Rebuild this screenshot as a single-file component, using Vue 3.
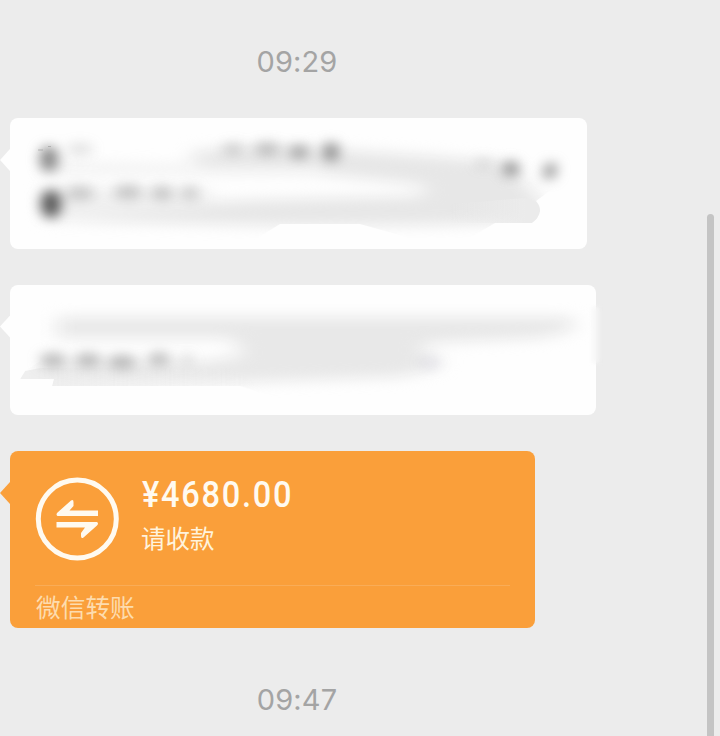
<script setup>
import { reactive } from 'vue'

const transfer = reactive({
  amount: '¥4680.00',
  hint: '请收款',
  source: '微信转账',
})
</script>

<template>
  <main class="chat">
    <time class="stamp">09:29</time>

    <section class="bubble first">
      <svg class="smudge" width="577" height="131" viewBox="10 118 577 131" aria-hidden="true">
        <defs>
          <filter id="soft" filterUnits="userSpaceOnUse" x="0" y="100" width="620" height="330" color-interpolation-filters="sRGB"><feGaussianBlur stdDeviation="10 7" /></filter>
          <filter id="mid" filterUnits="userSpaceOnUse" x="0" y="100" width="620" height="330" color-interpolation-filters="sRGB"><feGaussianBlur stdDeviation="6.5 6" /></filter>
          <filter id="tiny" filterUnits="userSpaceOnUse" x="0" y="100" width="620" height="330" color-interpolation-filters="sRGB"><feGaussianBlur stdDeviation="0.6" /></filter>
          <linearGradient id="tail" x1="450" x2="525" y1="0" y2="0" gradientUnits="userSpaceOnUse">
            <stop offset="0" stop-color="#ebebeb" stop-opacity="0" />
            <stop offset="1" stop-color="#ebebeb" />
          </linearGradient>
          <clipPath id="wipeA"><path d="M10 118H587V180L548 192L536 201Q540 205 540 211Q539 218 532 223H495L470 238H410L360 224H280L240 249H10Z" /></clipPath>
        </defs>
        <g clip-path="url(#wipeA)">
          <g filter="url(#soft)">
            <path d="M195 150L300 147L430 156L500 162L525 182L545 205V222L430 225L300 226L60 221L55 210L250 200L415 196L430 190L415 184L330 175L230 171L190 162Z" fill="#e7e7e7" />
            <path d="M45 163L210 166L325 164V174L50 173Z" fill="#f0f0f0" />
            <path d="M45 188L210 190V207L50 222Z" fill="#f0f0f0" />
          </g>
          <path d="M450 204L525 198Q540 200 540 211Q539 218 532 223H450Z" fill="url(#tail)" filter="url(#tiny)" />
        </g>
        <g filter="url(#mid)" fill="#777">
          <ellipse cx="49" cy="159" rx="9" ry="13" opacity=".9" />
          <ellipse cx="51" cy="204" rx="10" ry="14" fill="#555" opacity="1" />
          <ellipse cx="80" cy="149" rx="13" ry="6" opacity=".22" />
          <ellipse cx="80" cy="193" rx="14" ry="7" opacity=".37" />
          <ellipse cx="128" cy="192" rx="14" ry="7" opacity=".4" />
          <ellipse cx="162" cy="193" rx="11" ry="7" opacity=".4" />
          <ellipse cx="190" cy="193" rx="9" ry="7" opacity=".34" />
          <ellipse cx="233" cy="149" rx="11" ry="6" opacity=".32" />
          <ellipse cx="267" cy="149" rx="13" ry="7" opacity=".42" />
          <ellipse cx="299" cy="152" rx="10" ry="7" opacity=".62" />
          <ellipse cx="331" cy="152" rx="8" ry="10" opacity=".8" />
          <ellipse cx="484" cy="163" rx="9" ry="5" opacity=".2" />
          <ellipse cx="511" cy="169" rx="8" ry="8" opacity=".8" />
          <ellipse cx="550" cy="171" rx="6" ry="9" opacity=".8" transform="rotate(18 550 171)" />
        </g>
        <path d="M38 150H43M48 146.500H51" stroke="#999" stroke-width="1" opacity=".6" />
      </svg>
    </section>

    <section class="bubble second">
      <svg class="smudge" width="586" height="131" viewBox="10 284 586 131" aria-hidden="true">
        <defs>
          <linearGradient id="ledge" x1="40" x2="260" y1="0" y2="0" gradientUnits="userSpaceOnUse">
            <stop offset="0" stop-color="#ececec" />
            <stop offset="1" stop-color="#ececec" stop-opacity="0" />
          </linearGradient>
          <clipPath id="wipeB"><path d="M10 284H596V415H330L240 385H52L54 378H20L25 370L40 360V300H10Z" /></clipPath>
        </defs>
        <g clip-path="url(#wipeB)">
          <path d="M57 316H573L572 330L540 337L430 342L418 350L442 357L438 367L400 376L250 381L40 382V364L200 361L245 354L230 337H57Z" fill="#e8e8e8" filter="url(#soft)" />
          <path d="M20 378L25 370L40 367H230L260 385H52L54 378Z" fill="url(#ledge)" filter="url(#tiny)" opacity=".8" />
        </g>
        <g filter="url(#mid)" fill="#777">
          <ellipse cx="53" cy="359" rx="13" ry="7" opacity=".5" />
          <ellipse cx="88" cy="359" rx="13" ry="7" opacity=".5" />
          <ellipse cx="122" cy="361" rx="14" ry="7" opacity=".5" />
          <ellipse cx="159" cy="358" rx="11" ry="7" opacity=".46" />
          <ellipse cx="187" cy="358" rx="6" ry="6" opacity=".22" />
          <ellipse cx="430" cy="362" rx="10" ry="6" fill="#9997bd" opacity=".14" />
        </g>
      </svg>
      <span class="edge-haze"></span>
    </section>

    <section class="bubble transfer">
      <div class="summary">
        <svg class="icon" width="84" height="84" viewBox="0 0 84 84" aria-hidden="true">
          <circle cx="42.300" cy="42" r="39" fill="none" stroke="#fffaf0" stroke-width="5" />
          <path d="M63 33.500V39H22.500Q20.500 37.500 22.500 35.500L36 23.500Q38.500 22 38.500 25V29L34.500 33.500Z" fill="#fffaf0" />
          <path d="M21.500 50.500V45H62Q64 46.500 62 48.500L48.500 60.500Q46 62 46 59V56L50 50.500Z" fill="#fffaf0" />
        </svg>
        <div class="words">
          <div class="amount">{{ transfer.amount }}</div>
          <div class="hint">{{ transfer.hint }}</div>
        </div>
      </div>
      <footer class="source">{{ transfer.source }}</footer>
    </section>

    <time class="stamp last">09:47</time>
    <span class="scrollbar"></span>
  </main>
</template>

<style>
body {
  margin: 0;
  background: #ececec;
}
</style>

<style scoped>
.chat {
  position: relative;
  box-sizing: border-box;
  width: 720px;
  height: 736px;
  padding: 44px 0 0 10px;
  overflow: hidden;
  background: #ececec;
  font-family: Inter, "Noto Sans CJK SC", sans-serif;
}

.stamp {
  display: block;
  width: 574px;
  height: 36px;
  margin-bottom: 38px;
  color: #a4a4a4;
  font-size: 29px;
  font-weight: 400;
  line-height: 36px;
  letter-spacing: 0.1px;
  text-align: center;
}

.stamp.last {
  margin: 54px 0 0;
}

.bubble {
  position: relative;
  box-sizing: border-box;
  border-radius: 8px;
  background: #fefefe;
}

.bubble::before {
  position: absolute;
  top: 31px;
  left: -10px;
  width: 11px;
  height: 22px;
  background: inherit;
  clip-path: polygon(0 50%, 10px 0, 100% 0, 100% 100%, 10px 100%);
  content: "";
}

.first {
  width: 577px;
  height: 130.500px;
  margin-bottom: 36px;
}

.second {
  width: 585.500px;
  height: 130.500px;
  margin-bottom: 36px;
}

.smudge {
  display: block;
}

.edge-haze {
  position: absolute;
  top: 22px;
  right: -3px;
  width: 6px;
  height: 56px;
  background: #f5f5f5;
  filter: blur(2px);
}

.transfer {
  width: 524.500px;
  height: 177px;
  padding: 26px 25px 0;
  background: #fa9f3a;
}

.summary {
  display: flex;
  gap: 22px;
  height: 108px;
}

.icon {
  flex: none;
}

.amount {
  height: 36px;
  color: #fffaf0;
  font-family: Roboto, sans-serif;
  font-size: 36.500px;
  font-weight: 500;
  line-height: 36px;
  letter-spacing: 1.900px;
  white-space: nowrap;
  transform: translateX(1px) scaleX(0.893);
  transform-origin: left center;
}

.hint {
  margin-top: 7px;
  color: #fff3dc;
  font-family: "Noto Sans CJK SC", sans-serif;
  font-size: 24.500px;
  line-height: 36px;
}

.source {
  padding-left: 1px;
  border-top: 1px solid #f9ac57;
  color: #fddcae;
  font-family: "Noto Sans CJK SC", sans-serif;
  font-size: 24.700px;
  line-height: 41px;
}

.scrollbar {
  position: absolute;
  top: 214px;
  right: 6px;
  width: 7px;
  height: 540px;
  border-radius: 4px;
  background: #c4c4c4;
}
</style>
